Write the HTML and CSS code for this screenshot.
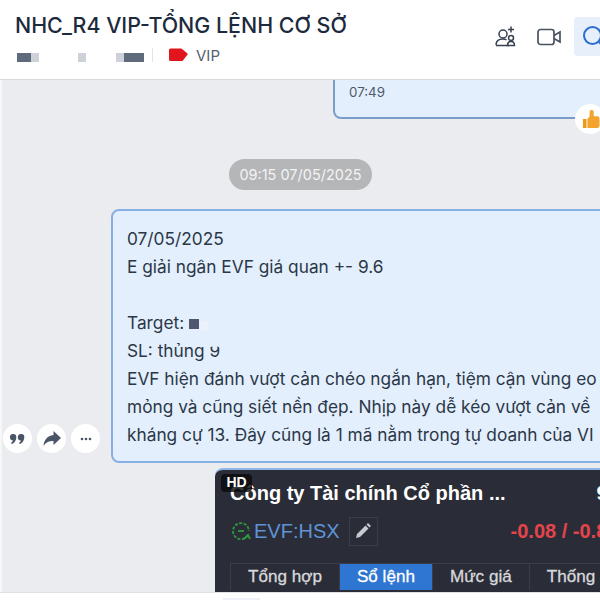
FILE: index.html
```html
<!DOCTYPE html>
<html lang="vi">
<head>
<meta charset="utf-8">
<title>NHC_R4 VIP</title>
<link rel="stylesheet" href="styles.css">
</head>
<body>
<div class="app">
  <header class="header">
    <div class="info">
      <h1 class="title">NHC_R4 VIP-TỔNG LỆNH CƠ SỞ</h1>
      <div class="meta">
        <div class="blur b1"><i class="d w14"></i><i class="l w10"></i></div>
        <div class="blur b2"><i class="l w10"></i></div>
        <div class="blur b3"><i class="l w10"></i><i class="d w20"></i></div>
        <span class="sep"></span>
        <svg class="tag" width="19" height="14" viewBox="0 0 19 14"><path d="M0 2a1.500 1.500 0 0 1 1.500-1.500h11L19 6l-5.500 7H1.500A1.500 1.500 0 0 1 0 11.500z" fill="#e0161c"/></svg>
        <span class="vip">VIP</span>
      </div>
    </div>
    <div class="tools">
      <button class="tool t-add"><svg width="24" height="24" viewBox="0 0 24 24" fill="none" stroke="#38424f" stroke-width="1.500"><circle cx="9" cy="9" r="4"/><path d="M2 20c0-4 3-6 7-6 1.500 0 2.500.3 3.500.8M2 20.500h13"/><circle cx="17" cy="13" r="2.500"/><path d="M13.500 20.500c0-2.500 1.500-4 3.500-4s3.500 1.500 3.500 4zM17 1.500v6M14 4.500h6"/></svg></button>
      <button class="tool t-video"><svg width="26" height="24" viewBox="0 0 26 24" fill="none" stroke="#4a5360" stroke-width="1.700"><rect x="1" y="4.500" width="16" height="15" rx="2.500"/><path d="M17 10.500l6-3.500v10l-6-3.500"/></svg></button>
      <button class="tool t-search"><svg width="26" height="26" viewBox="0 0 26 26" fill="none" stroke="#2a6dd0" stroke-width="2"><circle cx="11.500" cy="11.500" r="8.500"/><path d="M18 18l6 6"/></svg></button>
    </div>
  </header>

  <main class="chat">
    <div class="row row-top">
      <div class="bubble small">
        <span class="time">07:49</span>
        <span class="react"><svg width="18" height="20" viewBox="0 0 20 22"><path d="M1 11h4v10H1z" fill="#ec9a1c"/><path d="M6 11l2.500-3V3c0-2.500 4.500-2.500 4.500 0v5h4c2 0 2.500 1.500 2.500 3v7c0 2-1 3-2.500 3H6z" fill="#f3a42c"/></svg></span>
      </div>
    </div>
    <div class="stamp-row"><span class="stamp">09:15 07/05/2025</span></div>
    <div class="row row-msg">
      <div class="actions">
        <button class="act"><svg width="15" height="12" viewBox="0 0 15 12" fill="#4a5566"><path d="M3.300 1a3 3 0 0 1 3 3c0 3.500-2 6.300-4.600 7L1 9.800c1-.5 1.600-1.300 1.800-2.400A3.200 3.200 0 0 1 3.300 1zM11.300 1a3 3 0 0 1 3 3c0 3.500-2 6.300-4.600 7L9 9.800c1-.5 1.600-1.300 1.800-2.400A3.200 3.200 0 0 1 11.300 1z"/></svg></button>
        <button class="act"><svg width="18" height="15" viewBox="0 0 18 15" fill="#4a5566"><path d="M10.500 0L18 7l-7.500 7V10C6 10 3 11 0.500 15 1 9 4 5 10.500 4z"/></svg></button>
        <button class="act"><svg width="12" height="4" viewBox="0 0 12 4" fill="#4a5566"><circle cx="2" cy="2" r="1.300"/><circle cx="6" cy="2" r="1.300"/><circle cx="10" cy="2" r="1.300"/></svg></button>
      </div>
      <div class="bubble big">
        <p>07/05/2025</p>
        <p>E giải ngân EVF giá quan +- 9.6</p>
        <p>&nbsp;</p>
        <p>Target: <i class="mask"></i></p>
        <p>SL: thủng <span class="flip">9</span></p>
        <p>EVF hiện đánh vượt cản chéo ngắn hạn, tiệm cận vùng eo</p>
        <p>mỏng và cũng siết nền đẹp. Nhịp này dễ kéo vượt cản về</p>
        <p>kháng cự 13. Đây cũng là 1 mã nằm trong tự doanh của VI</p>
      </div>
    </div>
    <div class="row row-img">
      <div class="shot">
        <span class="hd">HD</span>
        <div class="shot-title"><span>Công ty Tài chính Cổ phần ...</span><span class="cut">9</span></div>
        <div class="shot-code">
          <svg width="22" height="22" viewBox="0 0 22 22" fill="none" stroke="#2f9a3f" stroke-width="1.800"><path d="M18 15a8 8 0 1 1 1-4" stroke-dasharray="3 1.500"/><path d="M8 11h6" /><path d="M14 19l4-4 2 4"/></svg>
          <span class="code">EVF:HSX</span>
          <span class="edit"><svg width="16" height="16" viewBox="0 0 16 16" fill="#c6c9d0"><path d="M1 15l1-4 8.500-8.500 3 3L5 14zM11.500 1.500L13 0l3 3-1.500 1.500z"/></svg></span>
          <span class="chg">-0.08 / -0.8</span>
        </div>
        <div class="tabs">
          <span class="tab">Tổng hợp</span>
          <span class="tab on">Sổ lệnh</span>
          <span class="tab">Mức giá</span>
          <span class="tab">Thống kê</span>
        </div>
      </div>
    </div>
  </main>
  <div class="foot"><span class="chip"></span></div>
</div>
</body>
</html>
```

FILE: styles.css
```css
* { box-sizing: border-box; }
html, body { margin: 0; padding: 0; }
body { width: 600px; height: 600px; overflow: hidden; background: #fff; font-family: Inter, "Noto Sans", sans-serif; color: #1c2b3f; }
.app { width: 600px; height: 600px; display: flex; flex-direction: column; overflow: hidden; }

.header { height: 80px; flex: none; display: flex; justify-content: space-between; background: #fff; border-bottom: 1px solid #d6d9de; padding: 0 0 0 15px; }
.info { display: flex; flex-direction: column; }
.title { margin: 11px 0 0; font-size: 21.4px; line-height: 28px; font-weight: 500; color: #1d2a3d; white-space: nowrap; }
.meta { display: flex; align-items: center; height: 20px; margin-top: 6px; }
.blur { display: flex; height: 9px; margin-top: 5px; filter: blur(.5px); }
.blur i { display: block; height: 9px; }
.d { background: #5f6b7c; }
.l { background: #ced1d8; }
.w14 { width: 14px; }
.w10 { width: 8px; }
.w20 { width: 20px; }
.b1 { margin-left: 2px; }
.b2 { margin-left: 39px; }
.b3 { margin-left: 30px; }
.sep { width: 1px; height: 14px; background: #e2e4e8; margin: 0 16px 0 8px; }
.tag { margin-right: 8px; }
.vip { font-size: 15px; color: #57606e; }

.tools { display: flex; align-items: flex-start; padding-top: 17px; margin-right: -13px; }
.tool { width: 38px; height: 39px; padding: 0; border: 0; background: none; display: flex; align-items: center; justify-content: center; margin-left: 5px; }
.t-add { margin-right: 1px; }
.t-search { background: #e6effa; border-radius: 4px; width: 39px; }

.chat { flex: 1; min-height: 0; background: #ebecf0; display: flex; flex-direction: column; border-left: 2px solid #f7f7f8; }
.row { display: flex; flex: none; }
.bubble { background: #e3effd; border: 2px solid #7aa5dc; flex: none; }
.row-top { justify-content: flex-start; padding-left: 331px; }
.small { position: relative; width: 300px; height: 39px; border-top: 0; border-radius: 0 0 0 8px; padding: 1px 14px 0; border-color: #7a9cc9; }
.time { font-size: 13.300px; line-height: 20px; color: #4d5a6b; }
.react { position: absolute; left: 240px; top: 24px; width: 30px; height: 30px; border-radius: 50%; background: #fff; display: flex; align-items: center; padding-left: 7px; }

.stamp-row { display: flex; justify-content: center; margin-top: 40px; padding-right: 1px; flex: none; }
.stamp { width: 143px; height: 31px; border-radius: 16px; background: #b5b6b8; color: #f3f3f4; font-size: 14.500px; line-height: 31px; text-align: center; white-space: nowrap; }

.row-msg { margin-top: 19px; align-items: flex-end; }
.actions { width: 109px; display: flex; gap: 5px; padding: 0 0 10px 1px; flex: none; }
.act { width: 29px; height: 29px; padding: 0; border: 0; border-radius: 50%; background: #fff; display: flex; align-items: center; justify-content: center; }
.big { width: 560px; height: 254px; border-radius: 8px; padding: 14px 14px; font-size: 17.300px; line-height: 28px; color: #2b3747; border-color: #86b0e4; }
.big p { margin: 0; white-space: nowrap; }
.mask { display: inline-block; width: 10px; height: 10px; background: #4e5670; box-shadow: 9px 2px 0 0 #ebf1fa; }
.flip { display: inline-block; clip-path: inset(35% 0 0 0); }

.row-img { margin-top: 5px; padding-left: 213px; }
.shot { position: relative; flex: none; width: 420px; height: 124px; background: #2a2d37; border-top: 2px solid #8fb6e6; border-radius: 8px 0 0 0; padding: 11px 0 0 15px; font-family: "Liberation Sans", Arial, sans-serif; color: #fff; }
.hd { position: absolute; left: 6px; top: 4px; width: 31px; height: 18px; border-radius: 4px; background: rgba(10,10,12,.8); font-size: 14px; line-height: 16px; font-weight: 700; text-align: center; z-index: 1; }
.shot-title { display: flex; font-size: 20px; line-height: 24px; font-weight: 700; white-space: nowrap; }
.cut { margin-left: 91px; }
.shot-code { display: flex; align-items: center; height: 32px; margin-top: 10px; }
.code { font-size: 20px; color: #5f93d6; margin-left: 2px; }
.shot-code svg { flex: none; }
.edit { width: 29px; height: 29px; margin-left: 9px; border: 1px solid #3b3e48; display: flex; align-items: center; justify-content: center; }
.chg { margin-left: 133px; font-size: 20px; font-weight: 700; color: #e5444b; white-space: nowrap; }
.tabs { display: flex; height: 27px; margin-top: 16px; border-top: 1px solid #3b3e48; font-size: 17.100px; line-height: 26px; color: #d8d9dc; -webkit-text-stroke: .3px currentColor; }
.tab { flex: none; padding: 0 17px; border-right: 1px solid #3b3e48; white-space: nowrap; }
.tabs .tab:first-child { border-left: 1px solid #3b3e48; }
.on { background: #2f76d2; color: #fff; }

.foot { height: 8px; flex: none; background: #fff; border-top: 1px solid #dfe0e3; display: flex; align-items: flex-end; }
.chip { width: 37px; height: 2px; margin-left: 223px; background: #eef1f6; }
```
